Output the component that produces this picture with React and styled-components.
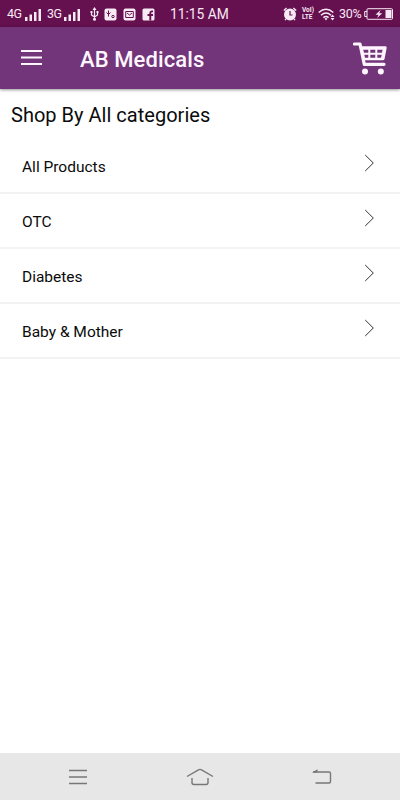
import React from "react";
import styled, { createGlobalStyle } from "styled-components";

const GlobalStyle = createGlobalStyle`
  * { box-sizing: border-box; }
  body { margin: 0; background: #fff; font-family: Roboto, "Liberation Sans", sans-serif; }
  svg { display: block; flex: none; }
`;

const Screen = styled.div`
  display: flex;
  flex-direction: column;
  height: 100vh;
  min-height: 800px;
  background: #fff;
  color: #0b0b0b;
`;

const StatusBar = styled.header`
  display: grid;
  grid-template-columns: 18px 22px 17px 26px 14px 19px 19px 28px 113px 19px 16px 21px 25px 30px;
  align-items: center;
  height: 27px;
  padding-left: 7px;
  padding-top: 1px;
  background: #65104f;
  color: #f8eaf5;
`;

const StatusText = styled.span`
  font-size: ${(p) => p.$size}px;
  line-height: 16px;
  letter-spacing: ${(p) => p.$spacing || 0}px;
  white-space: nowrap;
`;

const VolteBadge = styled.span`
  display: flex;
  flex-direction: column;
  font-size: 6.5px;
  font-weight: 700;
  line-height: 7px;
`;

const AppBar = styled.div`
  position: relative;
  display: flex;
  align-items: center;
  height: 62px;
  padding: 0 13px 0 20px;
  background: #723579;
  color: #fff5ff;
  box-shadow: 0 1px 3px rgba(0, 0, 0, 0.42);
`;

const IconButton = styled.button`
  display: flex;
  padding: 0 0 ${(p) => p.$lift || 0}px;
  border: 0;
  background: none;
  color: inherit;
`;

const Title = styled.h1`
  flex: 1;
  margin: 3px 0 0 38px;
  font-size: 22px;
  font-weight: 500;
  line-height: 26px;
  letter-spacing: 0.1px;
`;

const Content = styled.main`
  flex: 1;
`;

const Heading = styled.h2`
  height: 50px;
  margin: 0;
  padding: 13px 11px 0;
  font-size: 20px;
  font-weight: 400;
  line-height: 26px;
  letter-spacing: 0.02px;
`;

const CategoryList = styled.ul`
  margin: 0;
  padding: 0;
  list-style: none;
`;

const CategoryRow = styled.li`
  display: flex;
  align-items: center;
  justify-content: space-between;
  height: 55px;
  padding: 0 25px 0 22px;
  border-bottom: 2px solid #f3f3f3;
`;

const CategoryName = styled.span`
  padding-top: 2px;
  font-size: 15.5px;
  line-height: 20px;
`;

const ChevronBox = styled.span`
  padding-bottom: 5px;
`;

const NavBar = styled.nav`
  display: grid;
  grid-template-columns: 156px 88px 156px;
  align-items: center;
  justify-items: center;
  height: 47px;
  background: #e7e7e7;
  color: #777;
`;

const Signal = () => (
  <svg width="17" height="13" viewBox="0 0 17 13" fill="currentColor">
    <path d="M0 9h2.500v4H0zM4.500 6.500H7V13H4.500zM9 4h2.500v9H9zM13.500 1H16v12h-2.500z" />
  </svg>
);

const Usb = () => (
  <svg width="9" height="14" viewBox="0 0 9 14" fill="none" stroke="currentColor" strokeWidth="1.2">
    <path d="M4.500 2v10M1.500 5v3l3 2 3-2V5" />
    <path d="M4.500 0L6.500 3h-4zM.5 4h2v2h-2zM6.500 4h2v2h-2z" fill="currentColor" stroke="none" />
    <circle cx="4.500" cy="12.200" r="1.500" fill="currentColor" stroke="none" />
  </svg>
);

const Debug = () => (
  <svg width="13" height="13" viewBox="0 0 13 13">
    <rect x=".5" y=".5" width="12" height="12" rx="2" fill="currentColor" />
    <g fill="none" stroke="#65104f">
      <path d="M4.500 2.500v6M2.500 4.500l2 2 2-2" />
      <circle cx="9" cy="8.500" r="1.200" />
    </g>
  </svg>
);

const Mail = () => (
  <svg width="13" height="13" viewBox="0 0 13 13">
    <rect x=".5" y=".5" width="12" height="12" rx="2" fill="currentColor" />
    <path d="M2.700 3.500h7.600v6H2.700zM4 5l2.500 2L9 5" fill="none" stroke="#65104f" strokeWidth="1" />
  </svg>
);

const Facebook = () => (
  <svg width="13" height="13" viewBox="0 0 13 13">
    <rect x=".5" y=".5" width="12" height="12" rx="1.500" fill="currentColor" />
    <path d="M11 3.400H9.700Q8.300 3.400 8.300 5v7.500M5.500 7H11" fill="none" stroke="#65104f" strokeWidth="1.900" />
  </svg>
);

const Alarm = () => (
  <svg width="14" height="14" viewBox="0 0 14 14" fill="none" stroke="currentColor">
    <circle cx="7" cy="7.500" r="6" fill="currentColor" stroke="none" />
    <path d="M.8 3.500L3.600 1M13.200 3.500L10.400 1M3 12l-1 1.200M11 12l1 1.200" strokeWidth="1.300" />
    <path d="M7 4v4h2.500" stroke="#65104f" strokeWidth="1.200" />
  </svg>
);

const Wifi = () => (
  <svg width="18" height="13" viewBox="0 0 18 13" fill="none" stroke="currentColor" strokeWidth="1.500">
    <path d="M.7 4.500Q8-1.900 15.300 4.500M3 7.200Q8 2.700 13 7.200M5.400 9.600Q8 7.300 10.600 9.600" />
    <path d="M6.500 10.500Q8 9.500 9.500 10.500L8 12.500zM12.500 9L14.500 6.500 16.500 9zM12.500 10L14.500 12.500 16.500 10z" fill="currentColor" stroke="none" />
  </svg>
);

const Battery = () => (
  <svg width="30" height="12" viewBox="0 0 30 12">
    <path d="M3 3.500H.7v5H3" fill="none" stroke="currentColor" />
    <rect x="3" y=".7" width="25.500" height="10.600" rx="1" fill="none" stroke="currentColor" />
    <path d="M21.500 2h6v8h-6z" fill="currentColor" />
    <path d="M16.500 2l-5 4.700h3l-1.300 3.300 5-4.700h-3z" fill="currentColor" />
  </svg>
);

const MenuIcon = () => (
  <svg width="22" height="17" viewBox="0 0 22 17" fill="currentColor">
    <path d="M1 1h21v2H1zM1 7.500h21v2H1zM1 14h21v2H1z" />
  </svg>
);

const CartIcon = () => (
  <svg width="34" height="33" viewBox="0 0 34 33" fill="currentColor">
    <path d="M1.500 2H7L11.300 22.300H31" fill="none" stroke="currentColor" strokeWidth="3.200" strokeLinejoin="round" strokeLinecap="round" />
    <path
      fillRule="evenodd"
      d="M7.500 4.300H32.500Q34 4.300 33.700 5.800L31.600 16.800Q31.300 18.300 29.800 18.300H10.500ZM10.300 7.700L10.900 10.700H15.300V7.700ZM17.300 7.700V10.700H22.300V7.700ZM24.300 7.700V10.700H29L29.600 7.700ZM11.300 12.700L11.900 15.700H15.300V12.700ZM17.300 12.700V15.700H22.300V12.700ZM24.300 12.700V15.700H28.100L28.700 12.700Z"
    />
    <circle cx="12" cy="29.500" r="3" />
    <circle cx="27.800" cy="29.500" r="3" />
  </svg>
);

const Chevron = () => (
  <svg width="11" height="18" viewBox="0 0 11 18" fill="none" stroke="#333" strokeWidth="1">
    <path d="M1.200 1L9.300 9 1.200 17" />
  </svg>
);

const RecentsIcon = () => (
  <svg width="20" height="16" viewBox="0 0 20 16" stroke="currentColor" strokeWidth="1.400">
    <path d="M1 1.500h18M1 8h18M1 14.500h18" />
  </svg>
);

const HomeIcon = () => (
  <svg width="28" height="18" viewBox="0 0 28 18" fill="none" stroke="currentColor" strokeWidth="1.400" strokeLinejoin="round">
    <path d="M1 8.500L12.500 1.800Q14 1 15.500 1.800L27 8.500M6 10v4.500Q6 16.500 8 16.500H20Q22 16.500 22 14.500V10" />
  </svg>
);

const BackIcon = () => (
  <svg width="20" height="16" viewBox="0 0 20 16" fill="none" stroke="currentColor" strokeWidth="1.400">
    <path d="M1 3H17Q18.500 3 18.500 4.500V12.500Q18.500 14 17 14H3.500" />
    <path d="M0 3.500L5.500 .2V3.500z" fill="currentColor" stroke="none" />
  </svg>
);

const categories = ["All Products", "OTC", "Diabetes", "Baby & Mother"];

export default function App() {
  return (
    <>
      <GlobalStyle />
      <Screen>
        <StatusBar>
          <StatusText $size={12.5} $spacing={-0.6}>4G</StatusText>
          <Signal />
          <StatusText $size={12.5} $spacing={-0.6}>3G</StatusText>
          <Signal />
          <Usb />
          <Debug />
          <Mail />
          <Facebook />
          <StatusText $size={13.8}>11:15 AM</StatusText>
          <Alarm />
          <VolteBadge><span>VoI)</span><span>LTE</span></VolteBadge>
          <Wifi />
          <StatusText $size={12.5} $spacing={-0.3}>30%</StatusText>
          <Battery />
        </StatusBar>
        <AppBar>
          <IconButton aria-label="Menu" $lift={1}><MenuIcon /></IconButton>
          <Title>AB Medicals</Title>
          <IconButton aria-label="Cart"><CartIcon /></IconButton>
        </AppBar>
        <Content>
          <Heading>Shop By All categories</Heading>
          <CategoryList>
            {categories.map((name) => (
              <CategoryRow key={name}>
                <CategoryName>{name}</CategoryName>
                <ChevronBox><Chevron /></ChevronBox>
              </CategoryRow>
            ))}
          </CategoryList>
        </Content>
        <NavBar>
          <RecentsIcon />
          <HomeIcon />
          <BackIcon />
        </NavBar>
      </Screen>
    </>
  );
}
